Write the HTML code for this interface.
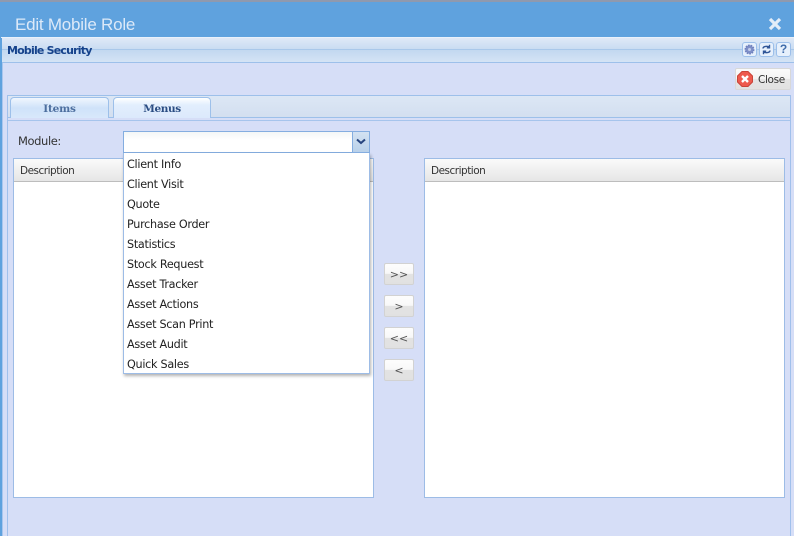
<!DOCTYPE html>
<html><head><meta charset="utf-8"><style>
html,body{margin:0;padding:0}
body{width:794px;height:536px;overflow:hidden;position:relative;background:#d6def7;font-family:"DejaVu Sans","Liberation Sans",sans-serif;font-size:11px;color:#222}
div{position:absolute;box-sizing:border-box}
.t{white-space:nowrap;line-height:14px}
.b{width:30px;height:22px;left:384px;border:1px solid #d2d2d2;border-radius:2px;background:linear-gradient(#fdfdfd 0,#f8f8f8 48%,#e3e3e3 50%,#e1e1e1 100%);text-align:center;line-height:22px;font-size:11px;color:#555}
.i{top:42px;width:15px;height:15px;background:#e6f0fc;border:1px solid #9cbfea;border-radius:3px;overflow:hidden}
.d{left:127px;white-space:nowrap;line-height:14px;font-size:11.2px;letter-spacing:-.28px;color:#222}
.g{top:158px;width:361px;height:340px;background:#fff;border:1px solid #9dbce6}
.gh{left:0;top:0;width:359px;height:23px;background:linear-gradient(#fafafa,#e6e6e6);border-bottom:1px solid #bdbdbd}
.gt{left:6px;top:5px;font-size:10.5px;letter-spacing:-.5px;color:#333}
</style></head><body>
<div style="left:0;top:0;width:794px;height:37px;background:#5fa2de"></div>
<div style="left:0;top:0;width:794px;height:2px;background:#8f99ae"></div>
<div class="t" style="left:15px;top:15px;font:17px/20px 'Liberation Sans',sans-serif;color:#dce9f8;letter-spacing:-.23px">Edit Mobile Role</div>
<svg style="position:absolute;left:768px;top:17px" width="14" height="14" viewBox="0 0 14 14"><path d="M2 2L12 12M12 2L2 12" stroke="#e3edf8" stroke-width="3.2"/></svg>

<div style="left:0;top:37px;width:2px;height:499px;background:#5fa2de"></div>
<div style="left:1px;top:37px;width:793px;height:1px;background:#e9f1fb"></div>
<div style="left:2px;top:38px;width:792px;height:11px;background:linear-gradient(#dfe9f7,#c9dcf2)"></div>
<div style="left:2px;top:49px;width:792px;height:13px;background:linear-gradient(#c2d8f0,#d4e3f5);border-top:1px solid #a9c8ea"></div>
<div style="left:2px;top:62px;width:792px;height:1px;background:#9dc0ea"></div>
<div style="left:2px;top:63px;width:1px;height:473px;background:#a9c6ee"></div>
<div class="t" style="left:7px;top:44px;font:bold 11px/14px 'DejaVu Sans',sans-serif;color:#15428b;letter-spacing:-.8px">Mobile Security</div>

<div class="i" style="left:742px"><svg width="13" height="13" viewBox="0 0 13 13"><circle cx="6.5" cy="6.5" r="4.2" fill="#7e8fc8" stroke="#6f80bd" stroke-width="1.6" stroke-dasharray="1.6 1"/><circle cx="6.5" cy="6.5" r="1.5" fill="#c3cdea"/></svg></div>
<div class="i" style="left:759px"><svg width="13" height="13" viewBox="0 0 13 13"><path d="M3 5.5C3 3.500 6 2.800 9 3.800M9.500 1.800V4.800H6.800M10 7.500C10 9.500 7 10.200 4 9.200M3.500 11.200V8.200H6.200" fill="none" stroke="#2f5597" stroke-width="1.4"/></svg></div>
<div class="i" style="left:776px;font:bold 12px/13px 'Liberation Sans',sans-serif;color:#3f6cab;text-align:center">?</div>

<div style="left:735px;top:68px;width:56px;height:22px;border:1px solid #d8d8d8;border-radius:2px;background:linear-gradient(#fbfbfb 0,#f4f4f4 48%,#e4e4e4 52%,#e2e2e2 100%)"></div>
<svg style="position:absolute;left:737px;top:71px" width="16" height="16" viewBox="0 0 16 16"><path d="M5 .5H11L15.500 5V11L11 15.500H5L.5 11V5Z" fill="#ee5a4e" stroke="#c9453a"/><path d="M5 5L11 11M11 5L5 11" stroke="#fff" stroke-width="2.400"/></svg>
<div class="t" style="left:758px;top:73px;font-size:10.5px;letter-spacing:-.35px;color:#333">Close</div>

<div style="left:7px;top:95px;width:784px;height:1px;background:#9dc0ea"></div>
<div style="left:7px;top:95px;width:1px;height:441px;background:#a0c0ec"></div>
<div style="left:790px;top:95px;width:1px;height:441px;background:#a0c0ec"></div>
<div style="left:8px;top:96px;width:782px;height:21px;background:linear-gradient(#dce7f5,#d3dff0)"></div>
<div style="left:8px;top:117px;width:782px;height:1px;background:#9dc0ea"></div>
<div style="left:8px;top:118px;width:782px;height:2px;background:#d6def7"></div>
<div style="left:8px;top:120px;width:782px;height:1px;background:#a6c4ec"></div>

<div style="left:10px;top:97px;width:99px;height:21px;border:1px solid #9dc0ea;border-bottom:0;border-radius:4px 4px 0 0;background:linear-gradient(#f0f6fe,#cfe2f9 50%,#d8e8fb)"></div>
<div class="t" style="left:10px;top:102px;width:99px;text-align:center;font:bold 10.5px/14px 'DejaVu Serif','Liberation Serif',serif;color:#4d6f9f;letter-spacing:-.2px">Items</div>
<div style="left:113px;top:97px;width:98px;height:21px;border:1px solid #9dc0ea;border-bottom:0;border-radius:4px 4px 0 0;background:linear-gradient(#fff,#e2eefd 35%,#dce9fc);z-index:1"></div>
<div class="t" style="left:113px;top:102px;width:98px;text-align:center;font:bold 10.5px/14px 'DejaVu Serif','Liberation Serif',serif;color:#2a4d83;letter-spacing:-.4px;z-index:2">Menus</div>

<div class="t" style="left:18px;top:134px;font-size:11.5px;letter-spacing:-.4px;color:#333">Module:</div>

<div class="g" style="left:13px"><div class="gh"></div><div class="t gt">Description</div></div>
<div class="g" style="left:424px"><div class="gh"></div><div class="t gt">Description</div></div>

<div class="b" style="top:263px">&gt;&gt;</div>
<div class="b" style="top:295px">&gt;</div>
<div class="b" style="top:327px">&lt;&lt;</div>
<div class="b" style="top:359px">&lt;</div>

<div style="left:123px;top:131px;width:247px;height:22px;background:linear-gradient(#f3f6f6,#fff 40%);border:1px solid #84ade0;z-index:3"></div>
<div style="left:352px;top:131px;width:18px;height:22px;background:linear-gradient(#d3e2f2,#b9d1ea);border:1px solid #84ade0;z-index:4"><svg width="16" height="20" viewBox="0 0 16 20"><path d="M4 7.500L8 11 12 7.500" fill="none" stroke="#27457f" stroke-width="2"/></svg></div>

<div style="left:123px;top:153px;width:247px;height:221px;background:#fff;border:1px solid #9dbce6;border-top:0;box-shadow:1px 2px 3px rgba(0,0,0,.3);z-index:3"></div>
<div style="left:0;top:0;width:794px;height:536px;z-index:5">
<div class="d" style="top:158px">Client Info</div>
<div class="d" style="top:178px">Client Visit</div>
<div class="d" style="top:198px">Quote</div>
<div class="d" style="top:218px">Purchase Order</div>
<div class="d" style="top:238px">Statistics</div>
<div class="d" style="top:258px">Stock Request</div>
<div class="d" style="top:278px">Asset Tracker</div>
<div class="d" style="top:298px">Asset Actions</div>
<div class="d" style="top:318px">Asset Scan Print</div>
<div class="d" style="top:338px">Asset Audit</div>
<div class="d" style="top:358px">Quick Sales</div>
</div>
</body></html>
